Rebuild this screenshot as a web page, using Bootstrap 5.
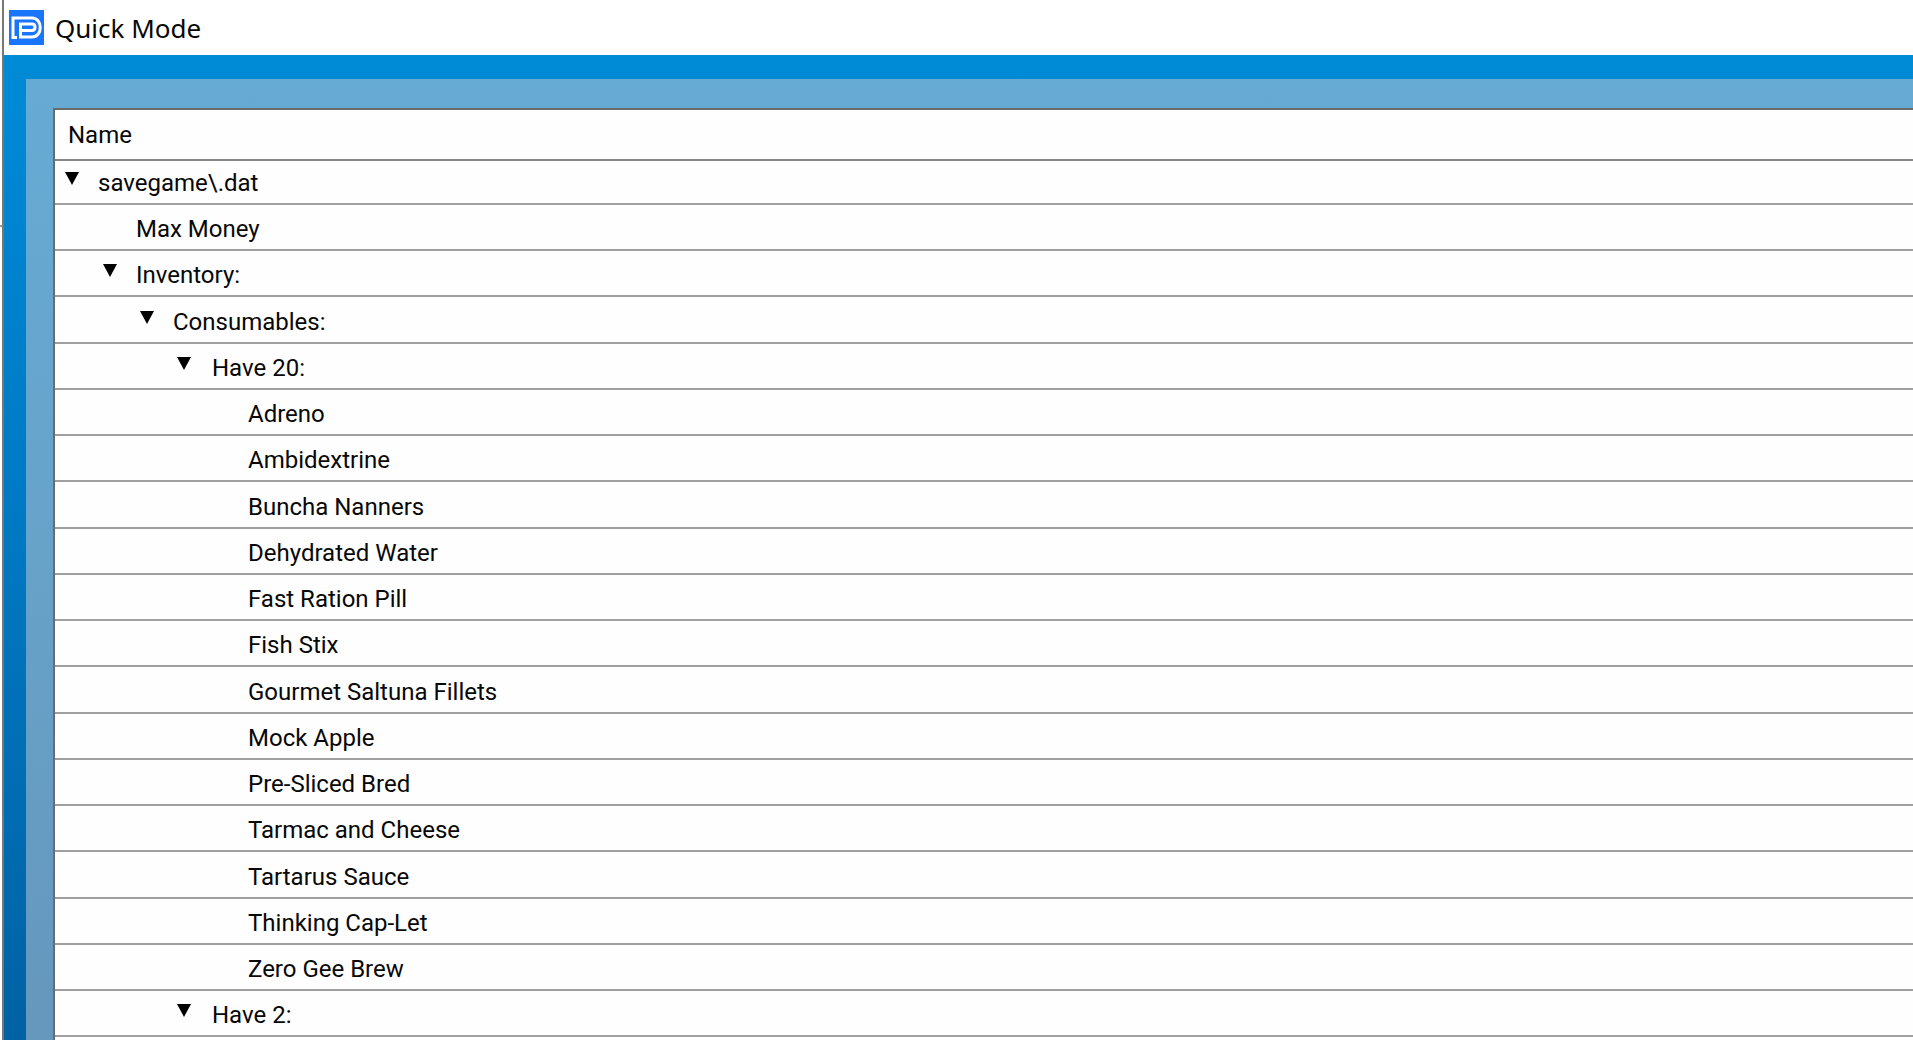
<!DOCTYPE html>
<html lang="en">
<head>
<meta charset="utf-8">
<meta name="viewport" content="width=device-width, initial-scale=1">
<title>Quick Mode</title>
<link href="https://cdn.jsdelivr.net/npm/bootstrap@5.3.0/dist/css/bootstrap.min.css" rel="stylesheet">
<style>
  body { font-family: "Liberation Sans Narrow", Roboto, "Liberation Sans", sans-serif; color: #080808; background: #fdfdfd; }
  .desk-edge { width: 4px; border-right: 2px solid #777; background: #fff; padding-top: 225px; }
  .desk-edge::before { content: ""; display: block; height: 2px; background: #999; }
  .title-bar { height: 55px; padding: 0 5px; gap: 11px; background: #fff; }
  .title-text { font: 26px/34px "Noto Sans", "Open Sans", sans-serif; }
  .frame-outer { padding: 24px 0 0 22px; background: linear-gradient(#008bd7, #0078c2 50%, #0062a4); }
  .frame-inner { padding: 29px 0 0 27px; background: linear-gradient(#66abd4, #67a2c9 50%, #6697bc); }
  .tree-panel { border: solid #6b6b6b; border-width: 2px 0 0 2px; background: #fefefe; }
  .tree { border-collapse: separate; border-spacing: 0; font-size: 24px; line-height: 30px; }
  .tree th { height: 51px; padding: 0 0 0 13px; font-weight: 400; border-bottom: 2px solid #868686; vertical-align: middle; }
  .tree td { height: 46px; padding: 0 0 5px; border-bottom: 2px solid #a0a0a0; vertical-align: bottom; }
  .tree tr:nth-child(4n) td { height: 47px; }
  .tree tr:first-child td { height: 44px; }
  .node { display: flex; align-items: flex-start; }
  .toggle { width: 33px; height: 30px; padding: 4px 0 13px; border: 0; background: none; line-height: 0; text-align: left; }
  .toggle svg { display: block; }
  .leaf { padding-left: 33px; }
  .lv0 { padding-left: 10px; }
  .lv1 { padding-left: 48px; }
  .lv2 { padding-left: 85px; }
  .lv3 { padding-left: 122px; }
  .lv4 { padding-left: 160px; }
  .lv3 .toggle { width: 35px; }
</style>
<script src="https://cdn.jsdelivr.net/npm/bootstrap@5.3.0/dist/js/bootstrap.bundle.min.js"></script>
</head>
<body class="d-flex vh-100 overflow-hidden">
<svg class="d-none" aria-hidden="true"><symbol id="down" viewBox="0 0 14 13"><path d="M0 0h14L7 13z"/></symbol></svg>
<div class="desk-edge flex-shrink-0"></div>
<main class="d-flex flex-column flex-grow-1">
  <header class="title-bar d-flex align-items-center flex-shrink-0">
    <svg width="35" height="35" viewBox="0 0 35 35" aria-hidden="true">
      <path fill="#1976fb" d="M0 0h35v35H0z"/>
      <path fill="none" stroke="#fff" stroke-width="3" d="M8 27.500H4V8h19c11 0 11 19 0 19H11.500V14H23c4 0 4 6.500 0 6.500H12"/>
    </svg>
    <h1 class="title-text m-0">Quick Mode</h1>
  </header>
  <div class="frame-outer d-flex flex-column flex-grow-1">
    <div class="frame-inner d-flex flex-column flex-grow-1">
      <div class="tree-panel flex-grow-1">
        <table class="tree w-100">
          <thead><tr><th scope="col">Name</th></tr></thead>
          <tbody>
            <tr><td><div class="node lv0"><button class="toggle" type="button" aria-label="Collapse savegame"><svg width="14" height="13"><use href="#down"/></svg></button><span>savegame\.dat</span></div></td></tr>
            <tr><td><div class="node lv1"><span class="leaf">Max Money</span></div></td></tr>
            <tr><td><div class="node lv1"><button class="toggle" type="button" aria-label="Collapse Inventory"><svg width="14" height="13"><use href="#down"/></svg></button><span>Inventory:</span></div></td></tr>
            <tr><td><div class="node lv2"><button class="toggle" type="button" aria-label="Collapse Consumables"><svg width="14" height="13"><use href="#down"/></svg></button><span>Consumables:</span></div></td></tr>
            <tr><td><div class="node lv3"><button class="toggle" type="button" aria-label="Collapse Have 20"><svg width="14" height="13"><use href="#down"/></svg></button><span>Have 20:</span></div></td></tr>
            <tr><td><div class="node lv4"><span class="leaf">Adreno</span></div></td></tr>
            <tr><td><div class="node lv4"><span class="leaf">Ambidextrine</span></div></td></tr>
            <tr><td><div class="node lv4"><span class="leaf">Buncha Nanners</span></div></td></tr>
            <tr><td><div class="node lv4"><span class="leaf">Dehydrated Water</span></div></td></tr>
            <tr><td><div class="node lv4"><span class="leaf">Fast Ration Pill</span></div></td></tr>
            <tr><td><div class="node lv4"><span class="leaf">Fish Stix</span></div></td></tr>
            <tr><td><div class="node lv4"><span class="leaf">Gourmet Saltuna Fillets</span></div></td></tr>
            <tr><td><div class="node lv4"><span class="leaf">Mock Apple</span></div></td></tr>
            <tr><td><div class="node lv4"><span class="leaf">Pre-Sliced Bred</span></div></td></tr>
            <tr><td><div class="node lv4"><span class="leaf">Tarmac and Cheese</span></div></td></tr>
            <tr><td><div class="node lv4"><span class="leaf">Tartarus Sauce</span></div></td></tr>
            <tr><td><div class="node lv4"><span class="leaf">Thinking Cap-Let</span></div></td></tr>
            <tr><td><div class="node lv4"><span class="leaf">Zero Gee Brew</span></div></td></tr>
            <tr><td><div class="node lv3"><button class="toggle" type="button" aria-label="Collapse Have 2"><svg width="14" height="13"><use href="#down"/></svg></button><span>Have 2:</span></div></td></tr>
          </tbody>
        </table>
      </div>
    </div>
  </div>
</main>
</body>
</html>
